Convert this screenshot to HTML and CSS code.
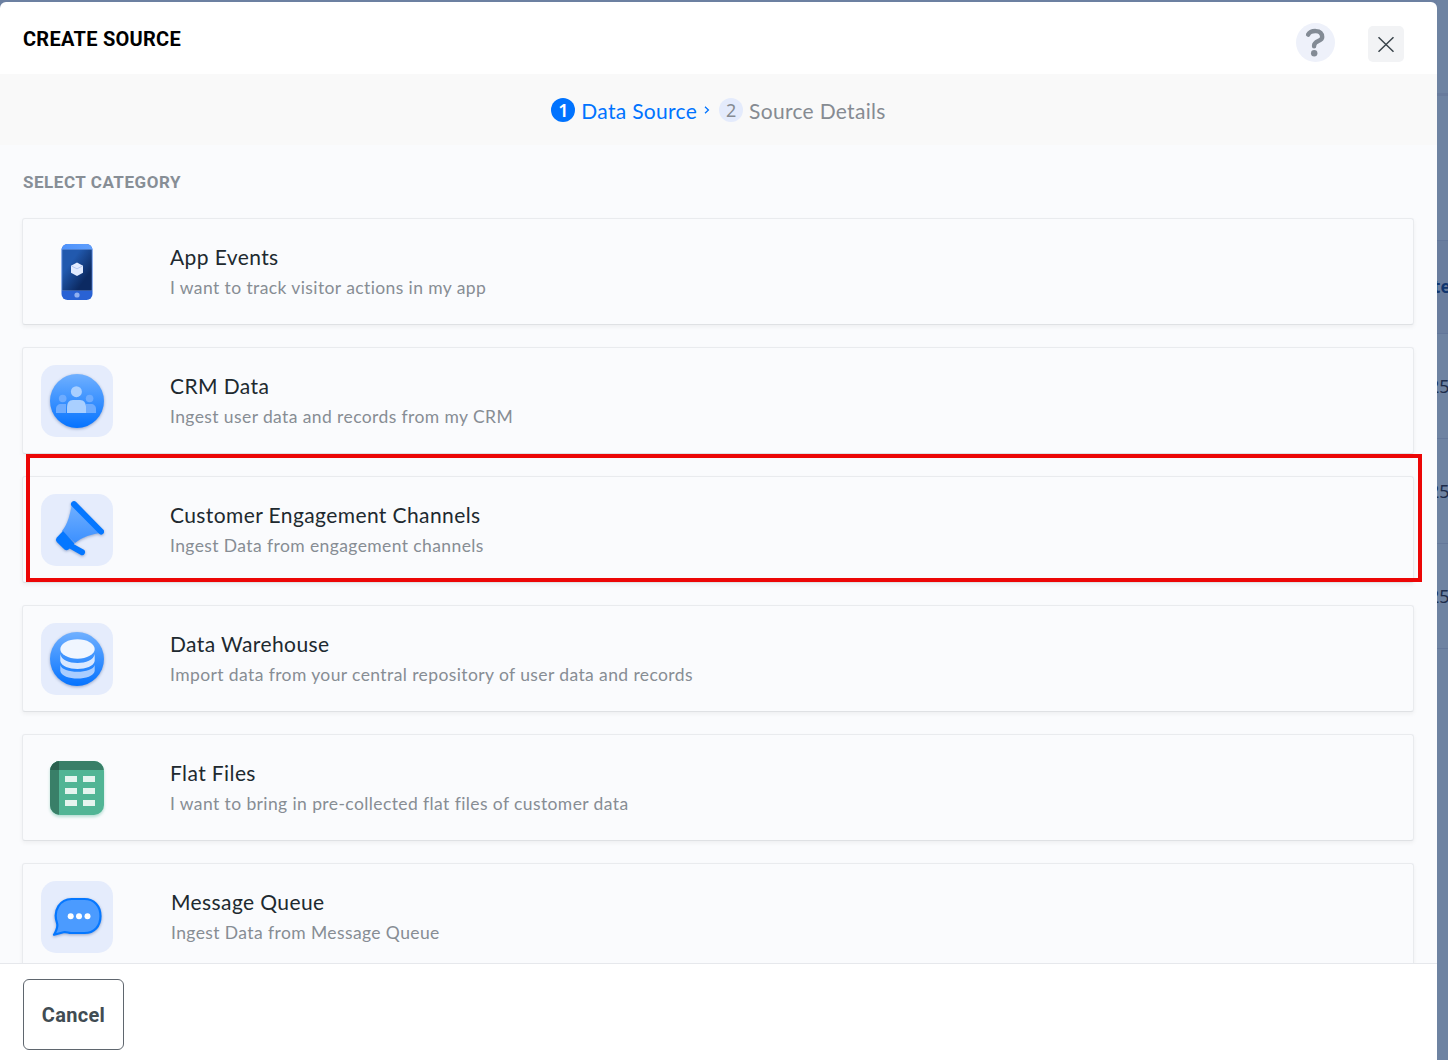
FILE: index.html
```html
<!DOCTYPE html>
<html lang="en">

<head>
    <meta charset="UTF-8">
    <meta name="viewport" content="width=device-width, initial-scale=1.0">
    <title>Create Source</title>
    <link rel="stylesheet" href="styles.css">
</head>

<body>

    <div class="page">
        <div class="modal">
            <div class="modal-header">
                <h1 class="modal-title">CREATE SOURCE</h1>
                <div class="modal-actions">
                    <button class="btn-help" aria-label="Help">
                        <svg width="39" height="39" viewBox="0 0 39 39">
                            <path d="M12.1 11.6C14.5 7.2 25.9 5.8 26.2 14C26.3 18.6 18.2 17.6 18.1 22.6V23.2" fill="none" stroke="#838b95" stroke-width="4.4" stroke-linecap="round" stroke-linejoin="round"/>
                            <circle cx="18.2" cy="30.3" r="3.2" fill="#838b95"/>
                        </svg>
                    </button>
                    <button class="btn-close" aria-label="Close">
                        <svg width="36" height="36" viewBox="0 0 36 36">
                            <path d="M10.5 11.2L25.5 25.8M25.5 11.2L10.5 25.8" stroke="#3c464d" stroke-width="1.5"/>
                        </svg>
                    </button>
                </div>
            </div>

            <div class="steps">
                <div class="step active">
                    <span class="step-num">1</span>
                    <span class="step-name">Data Source</span>
                </div>
                <svg class="step-arrow" width="6" height="8" viewBox="0 0 6 8">
                    <path d="M1 0.8L4.4 4L1 7.2" fill="none" stroke="#0073ff" stroke-width="1.3"/>
                </svg>
                <div class="step">
                    <span class="step-num">2</span>
                    <span class="step-name">Source Details</span>
                </div>
            </div>

            <div class="modal-body">
                <h2 class="section-title">SELECT CATEGORY</h2>
                <div class="category-list">

                    <div class="category">
                        <svg class="category-icon" viewBox="0 0 72 72">
                            <defs>
                                <linearGradient id="screen" x1="0" y1="0" x2="1" y2="1">
                                    <stop offset="0.3" stop-color="#2159ae"/>
                                    <stop offset="0.75" stop-color="#0c2a62"/>
                                </linearGradient>
                                <linearGradient id="phone-top">
                                    <stop offset="0" stop-color="#4d92fb"/>
                                    <stop offset="1" stop-color="#609ffd"/>
                                </linearGradient>
                            </defs>
                            <rect x="20.5" y="8" width="31" height="56" rx="6" fill="#2962d4"/>
                            <path d="M20.5 14A6 6 0 0 1 26.5 8H45.5A6 6 0 0 1 51.5 14Z" fill="url(#phone-top)"/>
                            <rect x="20.5" y="13.5" width="31" height="41" fill="#8fb4f1"/>
                            <rect x="21.2" y="13.5" width="29.6" height="41" fill="url(#screen)"/>
                            <path d="M36 26.5L42 29.7V36.8L36 40L30 36.8V29.7Z" fill="#e2ebff"/>
                            <path d="M30.5 30L36 32.8L41.5 30" fill="none" stroke="#b5c8f3" stroke-width="1"/>
                            <circle cx="36" cy="59" r="2.6" fill="#90b0f0"/>
                        </svg>
                        <div class="category-text">
                            <h3>App Events</h3>
                            <p>I want to track visitor actions in my app</p>
                        </div>
                    </div>

                    <div class="category">
                        <svg class="category-icon tile" viewBox="0 0 72 72">
                            <defs>
                                <linearGradient id="blue" x1="0" y1="0" x2="0" y2="1">
                                    <stop offset="0" stop-color="#70b0ff"/>
                                    <stop offset="1" stop-color="#0573ff"/>
                                </linearGradient>
                            </defs>
                            <circle class="lifted" cx="36" cy="36" r="27" fill="url(#blue)"/>
                            <g fill="#6eacff">
                                <circle cx="21.7" cy="33.5" r="3.8"/>
                                <path d="M15 48V44C15 41 17 39 20 39H25V48Z"/>
                                <circle cx="48.6" cy="33.5" r="3.8"/>
                                <path d="M55 48V44C55 41 53 39 50 39H45V48Z"/>
                            </g>
                            <circle cx="35.4" cy="26.7" r="5.5" fill="#a9cfff"/>
                            <path d="M26 48V42.5C26 38 28 35 32 35H39C43 35 45 38 45 42.5V48Z" fill="#a9cfff"/>
                        </svg>
                        <div class="category-text">
                            <h3>CRM Data</h3>
                            <p>Ingest user data and records from my CRM</p>
                        </div>
                    </div>

                    <div class="category">
                        <svg class="category-icon tile" viewBox="0 0 72 72">
                            <defs>
                                <linearGradient id="horn" x1="0" y1="0" x2="0" y2="1">
                                    <stop offset="0" stop-color="#71b0ff"/>
                                    <stop offset="1" stop-color="#3c90ff"/>
                                </linearGradient>
                            </defs>
                            <g class="lifted">
                                <path d="M31 10L61 38.5C51 40 41 43 34 49L21 37C27 30 29 20 31 10Z" fill="url(#horn)"/>
                                <path d="M33 10.2L60 37.5" stroke="#0577ff" stroke-width="6" stroke-linecap="round"/>
                                <path d="M22 37L33.5 49.5L27.5 55.5Q25.5 57 23.5 55.5L15.8 48Q14 46 15.6 43.8Z" fill="#0577ff"/>
                                <path d="M30 52L41 58.2" stroke="#0577ff" stroke-width="6" stroke-linecap="round"/>
                            </g>
                        </svg>
                        <div class="category-text">
                            <h3>Customer Engagement Channels</h3>
                            <p>Ingest Data from engagement channels</p>
                        </div>
                    </div>

                    <div class="category">
                        <svg class="category-icon tile" viewBox="0 0 72 72">
                            <circle class="lifted" cx="36" cy="36" r="27" fill="url(#blue)"/>
                            <path d="M19.3 42C21 51 52 51 53.7 42V48C52 58 21 58 19.3 48Z" fill="#a9cdff"/>
                            <path d="M19.3 31C21 43 52 43 53.7 31V38C52 48.500 21 48.500 19.3 38Z" fill="#d9e8ff"/>
                            <ellipse cx="36.5" cy="26" rx="17.2" ry="9.7" fill="#f0f6ff"/>
                        </svg>
                        <div class="category-text">
                            <h3>Data Warehouse</h3>
                            <p>Import data from your central repository of user data and records</p>
                        </div>
                    </div>

                    <div class="category">
                        <svg class="category-icon" viewBox="0 0 72 72">
                            <defs>
                                <clipPath id="sheet">
                                    <rect x="9" y="9" width="54" height="54" rx="10"/>
                                </clipPath>
                            </defs>
                            <g class="green">
                                <g clip-path="url(#sheet)">
                                    <rect x="9" y="9" width="54" height="54" fill="#51b595"/>
                                    <rect x="9" y="9" width="54" height="9" fill="#397f68"/>
                                    <rect x="9" y="9" width="9" height="54" fill="#397f68"/>
                                    <rect x="9" y="9" width="9" height="9" fill="#2b604f"/>
                                </g>
                            </g>
                            <path d="M24 24H36V30H24ZM42 24H54V30H42ZM24 36H36V42H24ZM42 36H54V42H42ZM24 48H36V54H24ZM42 48H54V54H42Z" fill="#e5f4ef"/>
                        </svg>
                        <div class="category-text">
                            <h3>Flat Files</h3>
                            <p>I want to bring in pre-collected flat files of customer data</p>
                        </div>
                    </div>

                    <div class="category queue">
                        <svg class="category-icon tile" viewBox="0 0 72 72">
                            <path class="lifted" d="M30.5 18H43.5C53 18 59.5 25 59.5 35C59.5 45.5 53 52 43.5 52H30C27 52 25.5 50.5 22.5 51.2L13 53.8C15.5 49.5 17.3 46 16 42C11.5 29 19.5 18 30.5 18Z" fill="#4b9bff" stroke="#0577ff" stroke-width="2.2" stroke-linejoin="round"/>
                            <g fill="#fff">
                                <circle cx="29.7" cy="35.3" r="3"/>
                                <circle cx="38" cy="35.3" r="3"/>
                                <circle cx="46.5" cy="35.3" r="3"/>
                            </g>
                        </svg>
                        <div class="category-text">
                            <h3>Message Queue</h3>
                            <p>Ingest Data from Message Queue</p>
                        </div>
                    </div>

                </div>
            </div>

            <div class="modal-footer">
                <button class="btn-cancel">Cancel</button>
            </div>
            <div class="highlight"></div>
        </div>

        <!-- table behind the modal -->
        <div class="backdrop">
            <div class="back-bar"></div>
            <div class="back-space"></div>
            <div class="back-head">te</div>
            <div class="back-row">25</div>
            <div class="back-row">25</div>
            <div class="back-row">25</div>
        </div>
    </div>

</body>

</html>
```

FILE: styles.css
```css
* {
    box-sizing: border-box;
}

body,
html {
    margin: 0;
    padding: 0;
    overflow: hidden;
}

body {
    font-family: Lato, "Noto Sans", sans-serif;
    background: #6c80a1;
}

h1,
h2,
h3,
p {
    margin: 0;
}

button {
    padding: 0;
    border: none;
    cursor: pointer;
}

svg {
    display: block;
}

.page {
    display: flex;
    height: 1060px;
}

.modal {
    position: relative;
    display: flex;
    flex-direction: column;
    width: 1437px;
    margin-top: 2px;
    border-radius: 6px 6px 0 0;
    background: #fff;
    overflow: hidden;
}

.modal-header {
    display: flex;
    justify-content: space-between;
    height: 72px;
    padding: 21px 33px 0 23px;
}

.modal-title {
    font: bold 20px/32px Roboto, sans-serif;
    letter-spacing: 0.27px;
    color: #000;
}

.modal-actions {
    display: flex;
    gap: 33px;
}

.btn-help {
    width: 39px;
    height: 39px;
    border-radius: 50%;
    background: #eef1fa;
}

.btn-close {
    width: 36px;
    height: 36px;
    margin-top: 3px;
    border-radius: 5px;
    background: #f2f3f5;
}

.steps {
    display: flex;
    justify-content: center;
    height: 71px;
    padding-top: 24px;
    background: #f9f9f9;
}

.step {
    display: flex;
    gap: 6px;
    color: #868b92;
}

.step-num {
    width: 24px;
    height: 24px;
    border-radius: 50%;
    background: #e4ebfc;
    font: 18px/24px "Noto Sans", sans-serif;
    text-align: center;
}

.step-name {
    font-size: 21px;
    line-height: 26px;
    letter-spacing: 0.3px;
}

.step.active {
    color: #0073ff;
}

.step.active .step-num {
    background: #0073ff;
    color: #fff;
    font-weight: 600;
}

.step-arrow {
    margin: 8px 9px 0 7px;
}

.modal-body {
    height: 818px;
    padding: 24px 23px 0 22px;
    background: #fafbfd;
    overflow: hidden;
}

.section-title {
    padding-left: 1px;
    font: bold 17px/26px Roboto, sans-serif;
    letter-spacing: 0.54px;
    color: #878e96;
}

.category-list {
    display: flex;
    flex-direction: column;
    gap: 22px;
    margin-top: 23px;
}

.category {
    display: flex;
    gap: 57px;
    height: 107px;
    padding: 17px 18px;
    border: 1px solid #e9ebee;
    border-bottom-color: #dfe1e4;
    border-radius: 3px;
    background: #fafbfd;
    box-shadow: 0 2px 4px rgba(0, 0, 0, 0.05);
}

.category-icon {
    width: 72px;
    height: 72px;
    flex: none;
}

.tile {
    border-radius: 15px;
    background: #e5ecfc;
}

.lifted {
    filter: drop-shadow(0 1px 1.5px rgba(50, 80, 140, 0.45));
}

.green {
    filter: drop-shadow(0 2px 1.5px rgba(81, 181, 149, 0.4));
}

.category-text {
    padding-top: 6px;
}

.category-text h3 {
    font-size: 21px;
    font-weight: normal;
    line-height: 30px;
    letter-spacing: 0.4px;
    color: #20292f;
}

.category-text p {
    font-size: 17.5px;
    line-height: 31px;
    letter-spacing: 0.4px;
    color: #878d94;
}

.queue {
    gap: 58px;
}

.modal-footer {
    height: 97px;
    padding: 15px 23px;
    border-top: 1px solid #e6e8ec;
}

.btn-cancel {
    width: 101px;
    height: 71px;
    border: 1px solid #5f666e;
    border-radius: 6px;
    background: #fff;
    font: bold 20px Roboto, sans-serif;
    letter-spacing: 0.3px;
    color: #414c53;
}

.highlight {
    position: absolute;
    top: 452px;
    left: 26px;
    width: 1396px;
    height: 128px;
    border: 4px solid #ec0606;
}

.backdrop {
    width: 11px;
    overflow: hidden;
    background: #6e83a2;
    font: 18px/104px "Noto Sans", sans-serif;
    color: #1d2d4c;
    white-space: nowrap;
}

.back-bar {
    height: 96px;
    border-bottom: 3px solid #687b9c;
}

.back-space {
    height: 144px;
}

.back-head {
    height: 94px;
    border-top: 1px solid #62769a;
    border-bottom: 1px solid #62769a;
    background: #697d9e;
    font-size: 17px;
    font-weight: bold;
    line-height: 92px;
    text-indent: -4px;
    color: #11366f;
}

.back-row {
    height: 105px;
    border-bottom: 1px solid #64789a;
    text-indent: -8px;
}
```
